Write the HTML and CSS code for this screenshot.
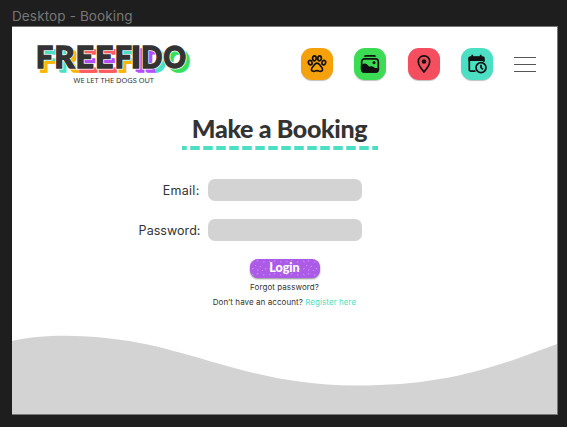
FILE: index.html
```html
<!DOCTYPE html>
<html lang="en">
<head>
<meta charset="utf-8">
<title>Desktop - Booking</title>
<link rel="stylesheet" href="styles.css">
</head>
<body>
<div class="frame-name">Desktop - Booking</div>
<div class="frame">
  <header class="header">
    <svg class="logo" viewBox="34 37 162 52" role="img" aria-label="FreeFido">
      <defs>
        <linearGradient id="cyanOrange" gradientUnits="userSpaceOnUse" x1="0" y1="45" x2="0" y2="69">
          <stop offset=".5" stop-color="#4be0c4"/><stop offset=".5" stop-color="#ffb400"/>
        </linearGradient>
        <linearGradient id="splitR" gradientUnits="userSpaceOnUse" x1="56" y1="0" x2="72" y2="0">
          <stop offset=".45" stop-color="#4be0c4"/><stop offset=".45" stop-color="#ffb400"/>
        </linearGradient>
        <linearGradient id="redPurple" gradientUnits="userSpaceOnUse" x1="0" y1="45" x2="0" y2="69">
          <stop offset=".35" stop-color="#ff5a5f"/><stop offset=".35" stop-color="#b64bff"/>
          <stop offset=".68" stop-color="#b64bff"/><stop offset=".68" stop-color="#ff5a5f"/>
        </linearGradient>
        <linearGradient id="purpleTeal" gradientUnits="userSpaceOnUse" x1="143" y1="0" x2="161" y2="0">
          <stop offset=".5" stop-color="#b64bff"/><stop offset=".5" stop-color="#4be0c4"/>
        </linearGradient>
        <g id="f"><text class="letter" x="36" y="68.3" textLength="17" lengthAdjust="spacingAndGlyphs">F</text></g>
        <g id="r"><text class="letter" x="54.5" y="68.3" textLength="20" lengthAdjust="spacingAndGlyphs">R</text></g>
        <g id="e1"><text class="letter" x="75.8" y="68.3" textLength="18" lengthAdjust="spacingAndGlyphs">E</text></g>
        <g id="e2"><text class="letter" x="95.3" y="68.3" textLength="18" lengthAdjust="spacingAndGlyphs">E</text></g>
        <g id="f2"><text class="letter" x="114.8" y="68.3" textLength="17" lengthAdjust="spacingAndGlyphs">F</text></g>
        <g id="i"><text class="letter" x="131" y="68.3" textLength="10" lengthAdjust="spacingAndGlyphs">I</text></g>
        <g id="d"><text class="letter" x="141.3" y="68.3" textLength="21" lengthAdjust="spacingAndGlyphs">D</text></g>
        <g id="o"><text class="letter" x="163.5" y="68.3" textLength="22.5" lengthAdjust="spacingAndGlyphs">O</text></g>
      </defs>
      <g class="shade">
        <g class="cyan-orange"><use href="#f" x="2.500" y="4"/><use href="#f" x="4" y="4"/></g>
        <g class="split"><use href="#r" x="4" y="4"/><use href="#r" x="3" y="3"/></g>
        <g class="red-purple"><use href="#e1" x="2" y="4"/><use href="#e1" x="4" y="4"/><use href="#e2" x="2" y="4"/><use href="#e2" x="4" y="4"/></g>
        <g class="cyan-orange"><use href="#f2" x="2.500" y="4"/><use href="#f2" x="4" y="4"/></g>
        <g class="purple"><use href="#i" x="5" y="4"/><use href="#i" x="3" y="3"/></g>
        <g class="purple-teal"><use href="#d" x="4" y="4"/><use href="#d" x="3" y="3"/></g>
        <g class="green"><use href="#o" x="4" y="4"/><use href="#o" x="3" y="3"/></g>
      </g>
      <g class="halo"><use href="#f"/><use href="#r"/><use href="#e1"/><use href="#e2"/><use href="#f2"/><use href="#i"/><use href="#d"/><use href="#o"/></g>
      <g class="ink"><use href="#f"/><use href="#r"/><use href="#e1"/><use href="#e2"/><use href="#f2"/><use href="#i"/><use href="#d"/><use href="#o"/></g>
      <text class="tagline" x="73.5" y="82.5" textLength="80.5" lengthAdjust="spacingAndGlyphs">WE LET THE DOGS OUT</text>
    </svg>
    <nav class="nav">
      <a class="tile orange">
        <svg viewBox="0 0 20 20" class="icon line">
          <ellipse cx="7.4" cy="4.3" rx="1.8" ry="2.5"/><ellipse cx="12.6" cy="4.3" rx="1.8" ry="2.5"/>
          <ellipse cx="3.2" cy="8.6" rx="1.8" ry="2.3" transform="rotate(-20 3.2 8.6)"/><ellipse cx="16.8" cy="8.6" rx="1.8" ry="2.3" transform="rotate(20 16.8 8.6)"/>
          <path d="M10 9.2c-2 0-2.5 1.7-3.7 3-1.3 1.3-2.3 2.1-1.8 3.7.5 1.7 2.4 1.5 3.6 1.1 1.3-.5 2.5-.5 3.8 0 1.2.4 3.1.6 3.6-1.1.5-1.6-.5-2.4-1.8-3.7-1.2-1.3-1.700-3-3.700-3z"/>
        </svg>
      </a>
      <a class="tile green-bg">
        <svg viewBox="0 0 20 20" class="icon line">
          <path d="M4.500 2.600Q5 1.800 6 1.800h8Q15 1.800 15.500 2.600"/><rect x="1.700" y="4.800" width="16.600" height="13.200" rx="2.800"/>
          <path class="solid" d="M1.700 12.200C4 9.200 6 10.200 8 12.600c1.500 1.500 2 .8 3.200.5 1.600-.4 2.600 1 3.400 1.800 1.500 0 2.700-.2 3.700.3-.2 2-1.500 2.800-3.300 2.800H5c-2.200 0-3.300-1.300-3.300-3.300z"/><circle class="solid" cx="14" cy="8.600" r=".7"/>
        </svg>
      </a>
      <a class="tile red">
        <svg viewBox="0 0 20 20" class="icon line">
          <path d="M10 18C6.300 13.800 4.300 10.500 4.300 7.500a5.700 5.700 0 0 1 11.400 0c0 3-2 6.300-5.700 10.500z"/><circle class="solid" cx="10" cy="7.500" r="1.500"/>
        </svg>
      </a>
      <a class="tile teal">
        <svg viewBox="0 0 20 20" class="icon line">
          <path d="M8.500 17.200H3.800a1.500 1.500 0 0 1-1.500-1.500V4.600a1.500 1.500 0 0 1 1.500-1.500h11.400a1.500 1.500 0 0 1 1.500 1.500V8M5.300 3V.8M13.700 3V.8"/>
          <path class="solid" d="M2.300 3.500h14.400v2.700H2.300z"/><circle cx="14" cy="13.600" r="5"/><path d="M14 10.800v2.800l2 1.700"/>
        </svg>
      </a>
    </nav>
    <div class="menu"><span></span><span></span><span></span></div>
  </header>
  <main class="booking">
    <h1 class="title">Make a Booking</h1>
    <svg class="dashes" viewBox="0 0 196 4"><path d="M0 2h196"/></svg>
    <form class="form">
      <label class="label" for="email">Email:</label><input class="field" id="email" type="email">
      <label class="label password" for="password">Password:</label><input class="field" id="password" type="password">
    </form>
    <button class="login">
      <svg class="speckle" viewBox="0 0 70 19">
        <defs><pattern id="confetti" width="17" height="13" patternUnits="userSpaceOnUse">
          <path d="M2 2l1.500 1M8 1l-1 1.500M13 3h1.500M5 6l1 1M11 7l-1.500 1M15 9l1 1.500M2 10l1.500-.5M7 11h1.500M12 12l.8-1"/>
        </pattern></defs>
        <rect width="70" height="19" fill="url(#confetti)"/>
      </svg>
      <span class="login-text">Login</span>
    </button>
    <a class="forgot">Forgot password?</a>
    <p class="register">Don’t have an account? <a class="link">Register here</a></p>
  </main>
  <svg class="wave" viewBox="12 335 545 79" preserveAspectRatio="none">
    <path d="M12 341C36 335.500 72 334 110 338.500C192 347 250 385.500 355 385.500C442 385.500 488 370 557 344V414H12z"/>
  </svg>
</div>
</body>
</html>
```
FILE: styles.css
```css
* { box-sizing: border-box; }

body {
  margin: 0;
  height: 427px;
  padding: 0 10px 0 12px;
  overflow: hidden;
  background: #1e1e1e;
  font-family: Inter, "Liberation Sans", sans-serif;
}

.frame-name {
  height: 26px;
  padding-top: 8px;
  color: #777;
  font-size: 13.500px;
  line-height: 17px;
  letter-spacing: 0.130px;
  white-space: nowrap;
}

.frame {
  display: flex;
  flex-direction: column;
  width: 546px;
  height: 389px;
  background: #fff;
  border: 1px solid #777;
  border-width: 1px 1px 1px 0;
  color: #333;
}

.header {
  display: flex;
  align-items: flex-start;
  height: 84px;
  padding: 10px 20px 0 22px;
}

.logo { width: 162px; height: 52px; flex: none; }
.letter { font-family: Lato, sans-serif; font-weight: 900; font-size: 30.500px; }
.tagline { font-family: "Noto Sans", sans-serif; font-size: 7.500px; fill: #333; }
.cyan-orange { fill: url(#cyanOrange); stroke: url(#cyanOrange); }
.split { fill: url(#splitR); stroke: url(#splitR); }
.red-purple { fill: url(#redPurple); stroke: url(#redPurple); }
.purple { fill: #b64bff; stroke: #b64bff; }
.purple-teal { fill: url(#purpleTeal); stroke: url(#purpleTeal); }
.green { fill: #37df5c; stroke: #37df5c; }
.shade { stroke-width: 1.600; }
.halo { fill: #fff; stroke: #fff; stroke-width: 3; }
.ink { fill: #333; stroke: #333; stroke-width: 1.500; }

.nav { display: flex; gap: 21px; margin: 11px 0 0 105px; }

.tile {
  display: grid;
  place-items: center;
  width: 32px;
  height: 32px;
  border-radius: 11px;
  box-shadow: 0 1px 1px rgba(0, 0, 0, 0.250);
}

.orange { background: #f4a10b; }
.green-bg { background: #3cdb54; }
.red { background: #f44e5f; }
.teal { background: #4be0c4; }
.nav { gap: 21.300px; }
.icon { width: 20px; height: 20px; }
.line { fill: none; stroke: #111; stroke-width: 1.700; stroke-linejoin: round; }
.solid { fill: #111; }

.menu {
  display: flex;
  flex-direction: column;
  gap: 6px;
  width: 22px;
  margin: 20px 0 0 21px;
}

.menu span { height: 1px; background: #555; }

.booking { display: flex; flex-direction: column; align-items: center; }

.title {
  margin: 0 0 0 -10px;
  height: 35px;
  font-family: Lato, sans-serif;
  font-weight: 900;
  font-size: 25px;
  line-height: 34px;
  letter-spacing: -0.350px;
  white-space: nowrap;
}

.dashes { width: 196px; height: 4px; margin-left: -10px; }
.dashes path { stroke: #4be0c4; stroke-width: 4; stroke-dasharray: 9.500 3.500; stroke-dashoffset: 4.750; }

.form {
  display: grid;
  grid-template-columns: 62px 154px;
  grid-auto-rows: 22px;
  column-gap: 8px;
  row-gap: 18px;
  margin: 29px 0 0 -70px;
}

.label {
  justify-self: end;
  font-size: 12.500px;
  line-height: 23px;
  letter-spacing: 0.250px;
  white-space: nowrap;
}

.password { margin-right: -1px; letter-spacing: 0.050px; }

.field {
  width: 154px;
  height: 22px;
  padding: 0 6px;
  border: 0;
  border-radius: 7px;
  background: #d3d3d3;
}

.login {
  display: grid;
  width: 70px;
  height: 19px;
  margin: 18px 0 0 0;
  padding: 0;
  border: 0;
  border-radius: 8px;
  overflow: hidden;
  background: #ac5ae8;
  box-shadow: 0 1px 2px rgba(0, 0, 0, 0.450);
}

.speckle, .login-text { grid-area: 1 / 1; }
.speckle { width: 70px; height: 19px; }
.speckle path { fill: none; stroke: #d39aee; stroke-width: 0.900; }
.login-text { color: #fff; font: 900 12.500px/18px Lato, sans-serif; }

.forgot { margin-top: 4px; font-size: 8px; line-height: 11px; letter-spacing: 0.070px; }
.register { margin: 4px 0 0; font-size: 8px; line-height: 11px; letter-spacing: 0.070px; white-space: nowrap; }
.link { color: #4bdfc4; }

.wave { width: 545px; height: 79px; margin-top: auto; fill: #d3d3d3; }
```
